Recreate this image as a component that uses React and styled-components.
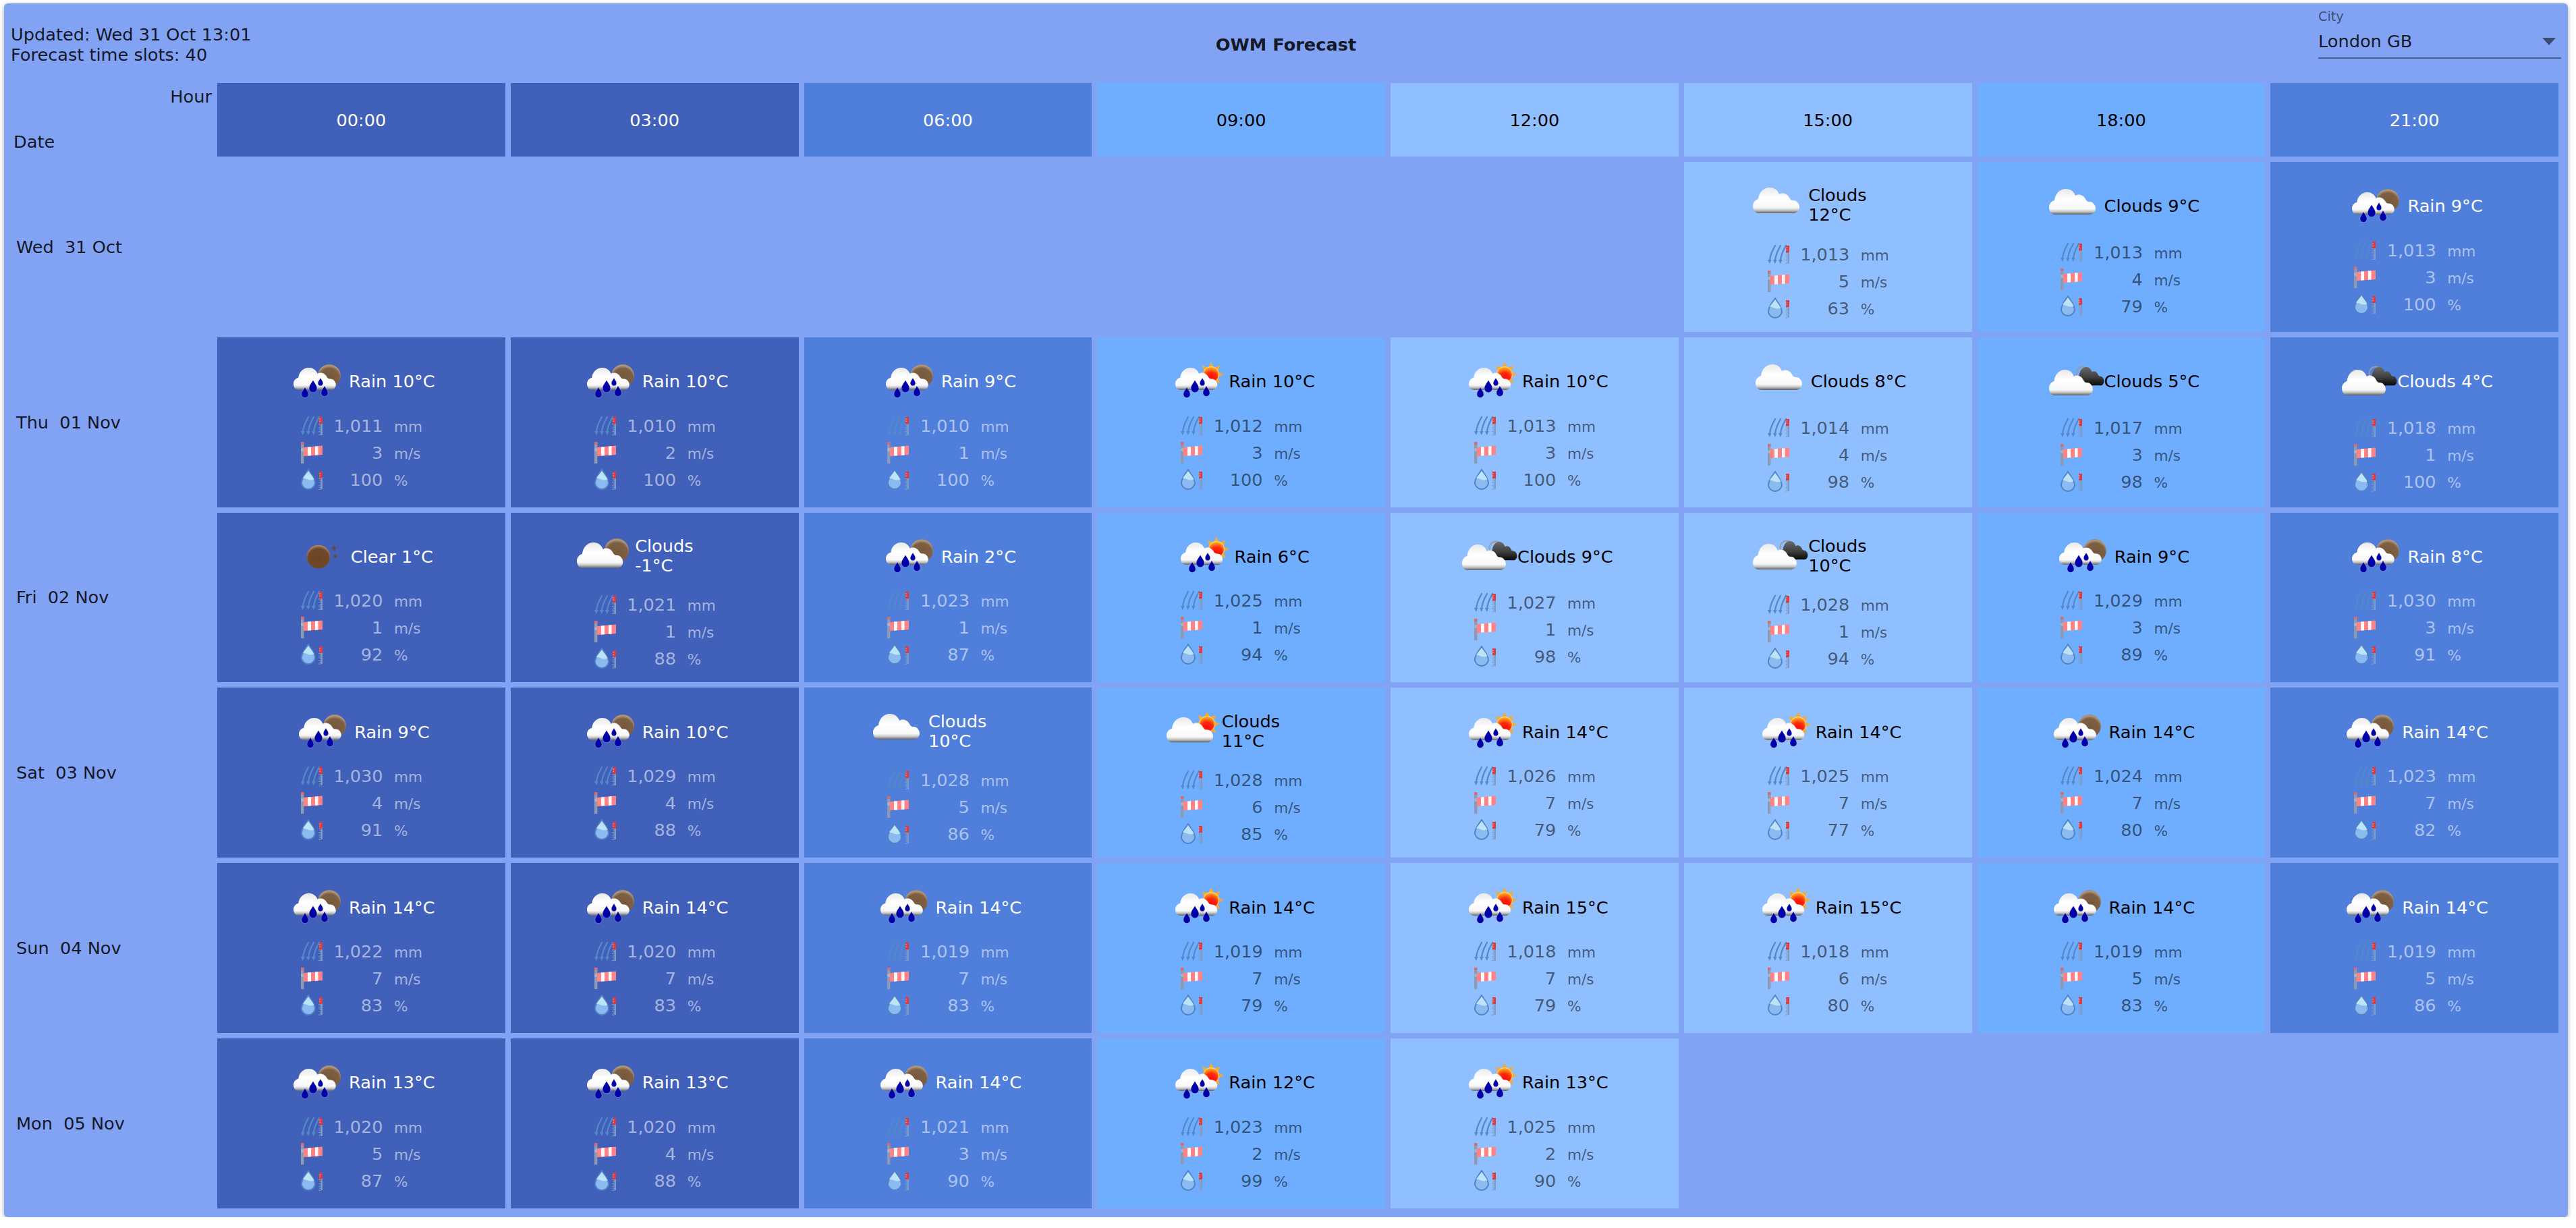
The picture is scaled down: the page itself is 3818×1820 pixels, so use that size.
import React, { useId } from "react";
import styled, { createGlobalStyle } from "styled-components";

const Global = createGlobalStyle`
  html, body { margin: 0; padding: 0; background: #fff; }
  body { font-family: "DejaVu Sans", Verdana, sans-serif; font-size: 25.6px; overflow: hidden; }
`;

const Panel = styled.main`
  box-sizing: border-box;
  width: 3800px;
  height: 1799px;
  margin: 5px 0 0 6px;
  background: #82a2f3;
  border-radius: 6px;
  box-shadow: 0 2px 7px rgba(0, 0, 0, 0.32);
  color: rgba(0, 0, 0, 0.87);
`;

const Toolbar = styled.header`
  box-sizing: border-box;
  height: 118px;
  padding: 4px 10px 0 10px;
  display: grid;
  grid-template-columns: 1fr auto 1fr;
  align-items: center;
`;

const Status = styled.div`
  line-height: 30px;
`;

const Title = styled.h1`
  margin: 0;
  font-size: 25.6px;
  font-weight: 700;
  color: rgba(0, 0, 0, 0.87);
`;

const CityField = styled.div`
  justify-self: end;
  align-self: start;
  width: 360px;
  margin-top: 6px;
`;

const CityLabel = styled.div`
  font-size: 19.2px;
  line-height: 20px;
  color: rgba(0, 0, 0, 0.54);
`;

const CityValue = styled.div`
  box-sizing: border-box;
  display: flex;
  align-items: center;
  justify-content: space-between;
  height: 52px;
  padding: 2px 8px 0 0;
  border-bottom: 2px solid rgba(0, 0, 0, 0.42);
`;

const Board = styled.section`
  display: grid;
  grid-template-columns: 308px repeat(8, 426.75px);
  grid-template-rows: 109px repeat(6, 251.8px);
  gap: 8px;
`;

const Corner = styled.div`
  box-sizing: border-box;
  display: flex;
  flex-direction: column;
  padding: 5px 0 7px 14px;
`;

const HourLabel = styled.span`
  align-self: flex-end;
`;

const DateLabel = styled.span`
  margin-top: auto;
`;

const RowLabel = styled.div`
  display: flex;
  align-items: center;
  padding-left: 18px;
`;

const tones = {
  deep: { bg: "#4160ba", fg: "#fff", sub: "rgba(255,255,255,0.54)" },
  mid: { bg: "#4f7edb", fg: "#fff", sub: "rgba(255,255,255,0.54)" },
  sky: { bg: "#6faeff", fg: "#000", sub: "rgba(0,0,0,0.54)" },
  pale: { bg: "#90bfff", fg: "#000", sub: "rgba(0,0,0,0.54)" },
};

const HourCell = styled.div`
  display: flex;
  align-items: center;
  justify-content: center;
  background: ${(p) => tones[p.$tone].bg};
  color: ${(p) => tones[p.$tone].fg};
`;

const Slot = styled.article`
  display: flex;
  flex-direction: column;
  align-items: center;
  justify-content: center;
  background: ${(p) => tones[p.$tone].bg};
  color: ${(p) => tones[p.$tone].fg};
`;

const Summary = styled.div`
  box-sizing: border-box;
  display: flex;
  align-items: center;
  justify-content: center;
  height: ${(p) => p.$height}px;
  padding-bottom: ${(p) => (p.$height > 96 ? 3 : 0)}px;
  max-width: 240px;
`;

const SummaryText = styled.span`
  line-height: 29px;
`;

const Metrics = styled.div`
  display: grid;
  grid-template-columns: 32px 73px 41px;
  grid-auto-rows: 40px;
  column-gap: 16.5px;
  align-items: baseline;
  color: ${(p) => tones[p.$tone].sub};
`;

const MetricIcon = styled.svg`
  width: 32px;
  height: 32px;
  align-self: center;
  display: block;
`;

const MetricValue = styled.span`
  text-align: right;
  line-height: 40px;
`;

const MetricUnit = styled.span`
  font-size: 21.6px;
  line-height: 40px;
  white-space: nowrap;
`;

const WeatherSvg = styled.svg`
  width: 91px;
  height: 60px;
  flex: none;
  display: block;
  overflow: visible;
`;

const CLOUD =
  "M9 38C3 38 0 33 0 27C0 22 4 18 8 17C9 7 16 0 25 0C32 0 37 4 39 10C44 7 51 9 54 15C56 19 58 19 60 19C65 19 69 24 69 29C69 34 65 38 60 38Z";
const DROP = "M0 -9C2.5 -4.5 5 -2.5 5 1.5A5 5 0 0 1 -5 1.5C-5 -2.5 -2.5 -4.5 0 -9Z";

const rays = (() => {
  const pts = [];
  for (let i = 0; i < 16; i += 1) {
    const a = (i * Math.PI) / 8 - Math.PI / 2;
    const r = i % 2 === 0 ? 18.5 : 11;
    pts.push(`${(r * Math.cos(a)).toFixed(2)},${(r * Math.sin(a)).toFixed(2)}`);
  }
  return pts.join(" ");
})();

function WeatherIcon({ kind }) {
  const id = useId().replace(/[^a-zA-Z0-9]/g, "");
  const hasDrops = kind === "nr" || kind === "dr";
  const moon = (x, y, r) => <circle cx={x} cy={y} r={r} fill={`url(#${id}moon)`} />;
  const sun = (x, y) => (
    <g transform={`translate(${x} ${y})`}>
      <polygon points={rays} fill="#f7ab2e" />
      <circle r="11.5" fill={`url(#${id}sun)`} stroke="#fde9a8" strokeWidth="0.8" />
    </g>
  );
  const cloud = (x, y, sx = 1, sy = 1) => (
    <path d={CLOUD} transform={`translate(${x} ${y}) scale(${sx} ${sy})`} fill={`url(#${id}cloud)`} />
  );
  return (
    <WeatherSvg viewBox="0 0 91 60">
      <defs>
        <linearGradient id={`${id}cloud`} x1="0" y1="0" x2="0" y2="1">
          <stop offset="0" stopColor="#e9e9e9" />
          <stop offset="0.4" stopColor="#ffffff" />
          <stop offset="0.78" stopColor="#f8f8f8" />
          <stop offset="0.88" stopColor="#c9c9c9" />
          <stop offset="1" stopColor="#5e6266" />
        </linearGradient>
        <linearGradient id={`${id}dark`} x1="0" y1="0" x2="0" y2="1">
          <stop offset="0" stopColor="#6a6a6a" />
          <stop offset="0.55" stopColor="#3e3e3e" />
          <stop offset="1" stopColor="#050505" />
        </linearGradient>
        <radialGradient id={`${id}moon`} cx="0.5" cy="0.62" r="0.62">
          <stop offset="0" stopColor="#76583c" />
          <stop offset="0.72" stopColor="#7d5f43" />
          <stop offset="0.92" stopColor="#b09a80" />
          <stop offset="1" stopColor="#9d8468" />
        </radialGradient>
        <radialGradient id={`${id}clear`} cx="0.5" cy="0.6" r="0.6">
          <stop offset="0" stopColor="#6b4425" />
          <stop offset="0.75" stopColor="#70482a" />
          <stop offset="0.95" stopColor="#a98a6c" />
          <stop offset="1" stopColor="#8a6a4c" />
        </radialGradient>
        <radialGradient id={`${id}sun`} cx="0.5" cy="0.75" r="0.75">
          <stop offset="0" stopColor="#fb0a06" />
          <stop offset="0.5" stopColor="#fd2a0a" />
          <stop offset="1" stopColor="#fdc323" />
        </radialGradient>
        <filter id={`${id}soft`} x="-10%" y="-10%" width="120%" height="120%">
          <feGaussianBlur stdDeviation="0.55" />
        </filter>
      </defs>
      <g filter={`url(#${id}soft)`}>
        {kind === "m" && (
          <>
            <circle cx="43" cy="30" r="17.5" fill={`url(#${id}clear)`} />
            <polygon points="66,13 67.2,16 70,16.4 67.8,18.4 68.4,21 66,19.6 63.6,21 64.2,18.4 62,16.4 64.8,16" fill="#6b4a30" />
            <polygon points="68,25.5 69,28 71.4,28.3 69.6,30 70,32.4 68,31.2 66,32.4 66.4,30 64.6,28.3 67,28" fill="#6b4a30" />
          </>
        )}
        {kind === "nr" && (
          <>
            {moon(62, 21, 17)}
            {cloud(9, 9, 0.91, 0.87)}
          </>
        )}
        {kind === "dr" && (
          <>
            {sun(65, 19)}
            {cloud(12, 9, 0.9, 0.87)}
          </>
        )}
        {kind === "c" && cloud(9, 4)}
        {kind === "dc" && (
          <>
            <circle cx="59" cy="17" r="9.5" fill="none" stroke="#9a9a9a" strokeWidth="1.8" />
            <path d={CLOUD} transform="translate(49 8) scale(0.6 0.72)" fill={`url(#${id}dark)`} />
            {cloud(9, 12, 0.94, 1)}
          </>
        )}
        {kind === "nc" && (
          <>
            {moon(64, 22, 18)}
            {cloud(5, 10, 0.99, 1)}
          </>
        )}
        {kind === "sc" && (
          <>
            {sun(69, 19)}
            {cloud(9, 9, 1, 0.98)}
          </>
        )}
        {hasDrops && (
          <g transform={kind === "dr" ? "translate(3 0)" : undefined} fill="#0000a8" stroke="#ffffff" strokeOpacity="0.35" strokeWidth="0.7">
            <path d={DROP} transform="translate(49 31) scale(0.74)" />
            <path d={DROP} transform="translate(38 38) scale(1.18)" />
            <path d={DROP} transform="translate(26 47) scale(1)" />
            <path d={DROP} transform="translate(55 45) scale(1)" />
          </g>
        )}
      </g>
    </WeatherSvg>
  );
}

const Ruler = ({ y1, y2 }) => {
  const ticks = [];
  const redEnd = y1 + (y2 - y1) * 0.38;
  for (let y = y1 + redEnd - y1; y <= y2; y += 2.6) ticks.push(y);
  return (
    <g>
      <rect x="29.6" y={y1} width="2.4" height={y2 - y1} fill="#7f9cc6" />
      {ticks.map((y, i) => (
        <rect key={y} x={i % 2 ? 27.6 : 26.4} y={y} width="3" height="1.2" fill="#7f9cc6" />
      ))}
      <rect x="27" y={y1} width="5" height={redEnd - y1} fill="#dc3a3e" />
      <rect x="27" y={y1 + 2.4} width="2.4" height="1.2" fill="#e58a8a" />
      <rect x="27" y={y1 + 5.6} width="2.4" height="1.2" fill="#e58a8a" />
    </g>
  );
};

function GaugeIcon() {
  return (
    <MetricIcon viewBox="0 0 32 32">
      <g fill="none" stroke="#5489c8" strokeWidth="2.2" strokeLinecap="round">
        <path d="M11 3C8 9 4 14 2.8 26" />
        <path d="M19 3C16 9 12 14 10.8 26" />
        <path d="M27 3C24 9 20 14 18.8 26" />
      </g>
      <g fill="#5489c8">
        <path d="M0 24L5.6 24L2.8 30Z" />
        <path d="M8 24L13.6 24L10.8 30Z" />
        <path d="M16 24L21.6 24L18.8 30Z" />
      </g>
      <Ruler y1={3} y2={30} />
    </MetricIcon>
  );
}

function SockIcon() {
  return (
    <MetricIcon viewBox="0 0 32 32">
      <rect x="0" y="0" width="4.4" height="32" fill="#8d9ab2" />
      <rect x="0" y="0" width="4.4" height="4" fill="#d96a6f" />
      <circle cx="2.4" cy="11.5" r="2.6" fill="#aab2c2" />
      <path d="M4 8L32 5.5L32 19L4 21Z" fill="#ff8386" />
      <path d="M10 7.6L15 7.2L15 20.2L10 20.6ZM21 6.6L25.5 6.2L25.5 19.4L21 19.7Z" fill="#fff" fillOpacity="0.95" />
    </MetricIcon>
  );
}

function DropIcon() {
  return (
    <MetricIcon viewBox="0 0 32 32">
      <path d="M11 1C14 7 21 13 21 21.5A10.2 10.2 0 0 1 0.9 21.5C0.9 13 7.5 7 11 1Z" fill="#8abaf0" stroke="#4f84c6" strokeWidth="1.9" />
      <path d="M11 3C13.5 7 17.5 11 19.5 15.5C16 17.5 12 16.5 9 15L3 13.5C5.5 9.5 9 6.5 11 3Z" fill="#bde3f8" />
      <Ruler y1={4} y2={30} />
    </MetricIcon>
  );
}

const HOURS = ["00:00", "03:00", "06:00", "09:00", "12:00", "15:00", "18:00", "21:00"];
const TONES = ["deep", "deep", "mid", "sky", "pale", "pale", "sky", "mid"];

const s = (main, temp, kind, pressure, wind, humidity) => ({ main, temp, kind, pressure, wind, humidity });

const ROWS = [
  ["Wed\u00a0\u00a031 Oct", [null, null, null, null, null,
    s("Clouds", 12, "c", "1,013", 5, 63), s("Clouds", 9, "c", "1,013", 4, 79), s("Rain", 9, "nr", "1,013", 3, 100)]],
  ["Thu\u00a0\u00a001 Nov", [
    s("Rain", 10, "nr", "1,011", 3, 100), s("Rain", 10, "nr", "1,010", 2, 100), s("Rain", 9, "nr", "1,010", 1, 100),
    s("Rain", 10, "dr", "1,012", 3, 100), s("Rain", 10, "dr", "1,013", 3, 100), s("Clouds", 8, "c", "1,014", 4, 98),
    s("Clouds", 5, "dc", "1,017", 3, 98), s("Clouds", 4, "dc", "1,018", 1, 100)]],
  ["Fri\u00a0\u00a002 Nov", [
    s("Clear", 1, "m", "1,020", 1, 92), s("Clouds", -1, "nc", "1,021", 1, 88), s("Rain", 2, "nr", "1,023", 1, 87),
    s("Rain", 6, "dr", "1,025", 1, 94), s("Clouds", 9, "dc", "1,027", 1, 98), s("Clouds", 10, "dc", "1,028", 1, 94),
    s("Rain", 9, "nr", "1,029", 3, 89), s("Rain", 8, "nr", "1,030", 3, 91)]],
  ["Sat\u00a0\u00a003 Nov", [
    s("Rain", 9, "nr", "1,030", 4, 91), s("Rain", 10, "nr", "1,029", 4, 88), s("Clouds", 10, "c", "1,028", 5, 86),
    s("Clouds", 11, "sc", "1,028", 6, 85), s("Rain", 14, "dr", "1,026", 7, 79), s("Rain", 14, "dr", "1,025", 7, 77),
    s("Rain", 14, "nr", "1,024", 7, 80), s("Rain", 14, "nr", "1,023", 7, 82)]],
  ["Sun\u00a0\u00a004 Nov", [
    s("Rain", 14, "nr", "1,022", 7, 83), s("Rain", 14, "nr", "1,020", 7, 83), s("Rain", 14, "nr", "1,019", 7, 83),
    s("Rain", 14, "dr", "1,019", 7, 79), s("Rain", 15, "dr", "1,018", 7, 79), s("Rain", 15, "dr", "1,018", 6, 80),
    s("Rain", 14, "nr", "1,019", 5, 83), s("Rain", 14, "nr", "1,019", 5, 86)]],
  ["Mon\u00a0\u00a005 Nov", [
    s("Rain", 13, "nr", "1,020", 5, 87), s("Rain", 13, "nr", "1,020", 4, 88), s("Rain", 14, "nr", "1,021", 3, 90),
    s("Rain", 12, "dr", "1,023", 2, 99), s("Rain", 13, "dr", "1,025", 2, 90), null, null, null]],
];

const summaryHeight = ({ main, temp }) => {
  if (main !== "Clouds") return 90;
  return temp < 0 || temp >= 10 ? 102 : 96;
};

function ForecastSlot({ data, tone }) {
  return (
    <Slot $tone={tone}>
      <Summary $height={summaryHeight(data)}>
        <WeatherIcon kind={data.kind} />
        <SummaryText>{`${data.main} ${data.temp}°C`}</SummaryText>
      </Summary>
      <Metrics $tone={tone}>
        <GaugeIcon />
        <MetricValue>{data.pressure}</MetricValue>
        <MetricUnit>mm</MetricUnit>
        <SockIcon />
        <MetricValue>{data.wind}</MetricValue>
        <MetricUnit>m/s</MetricUnit>
        <DropIcon />
        <MetricValue>{data.humidity}</MetricValue>
        <MetricUnit>%</MetricUnit>
      </Metrics>
    </Slot>
  );
}

export default function App() {
  return (
    <>
      <Global />
      <Panel>
        <Toolbar>
          <Status>
            Updated: Wed 31 Oct 13:01
            <br />
            Forecast time slots: 40
          </Status>
          <Title>OWM Forecast</Title>
          <CityField>
            <CityLabel>City</CityLabel>
            <CityValue>
              London GB
              <svg width="20" height="11" viewBox="0 0 20 11">
                <polygon points="0,0 20,0 10,11" fill="rgba(0,0,0,0.54)" />
              </svg>
            </CityValue>
          </CityField>
        </Toolbar>
        <Board>
          <Corner>
            <HourLabel>Hour</HourLabel>
            <DateLabel>Date</DateLabel>
          </Corner>
          {HOURS.map((h, i) => (
            <HourCell key={h} $tone={TONES[i]}>
              {h}
            </HourCell>
          ))}
          {ROWS.map(([label, slots]) => (
            <React.Fragment key={label}>
              <RowLabel>{label}</RowLabel>
              {slots.map((slot, i) =>
                slot ? <ForecastSlot key={HOURS[i]} data={slot} tone={TONES[i]} /> : <div key={HOURS[i]} />
              )}
            </React.Fragment>
          ))}
        </Board>
      </Panel>
    </>
  );
}
